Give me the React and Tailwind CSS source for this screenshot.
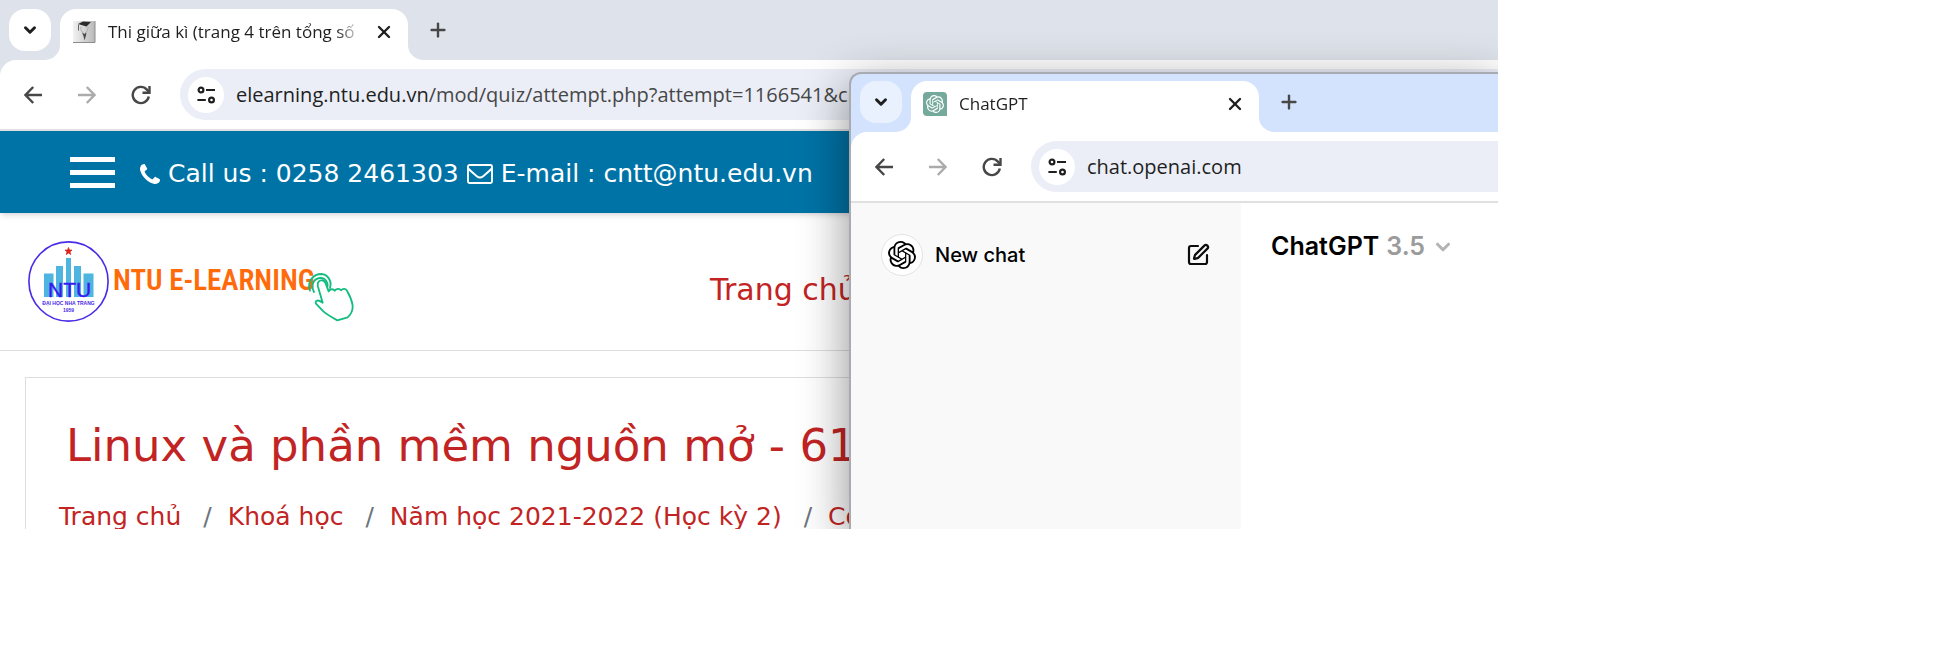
import { Plus, X, ChevronDown, SquarePen } from "lucide-react";
import { SiOpenai } from "react-icons/si";

function TuneIcon() {
  return (
    <svg viewBox="0 0 20 20" className="size-5" fill="none" stroke="#1f1f1f" strokeWidth="2.2" aria-hidden="true">
      <circle cx="5" cy="5" r="2.400" />
      <path d="M10 5h9M1.400 15h8.400" />
      <circle cx="15.500" cy="15" r="2.400" />
    </svg>
  );
}

function ArrowIcon({ forward }) {
  return (
    <svg viewBox="0 0 18 18" className="size-[18px]" fill="none" strokeWidth="2.400" stroke={forward ? "#ababab" : "#474747"} aria-hidden="true">
      {forward ? <path d="M0 9h16M8.800 1l7.700 8-7.700 8" /> : <path d="M18 9H2M9.200 1L1.500 9l7.700 8" />}
    </svg>
  );
}

function ReloadIcon() {
  return (
    <svg viewBox="0 0 20 20" className="size-5" fill="none" stroke="#474747" strokeWidth="2.400" aria-hidden="true">
      <path d="M17.800 11.500A8.100 8.100 0 1 1 15.900 4.600L18 7" />
      <path d="M18.500 1v6.700h-7" />
    </svg>
  );
}

function PhoneIcon() {
  return (
    <svg viewBox="0 128 1408 1408" className="size-5" fill="currentColor" aria-hidden="true">
      <path d="M1408 1240q0 27-10 70.500t-21 68.500q-21 50-122 106-94 51-186 51-27 0-52.500-3.500t-57.500-12.500-47.500-14.500-55.500-20.500-49-18q-98-35-175-83-128-79-264.500-215.500t-215.500-264.500q-48-77-83-175-3-9-18-49t-20.500-55.500-14.500-47.500-12.500-57.500-3.500-52.500q0-92 51-186 56-101 106-122 25-11 68.500-21t70.500-10q14 0 21 3 18 6 53 76 11 19 30 54t35 63.500 31 53.500q3 4 17.500 25t21.500 35.500 7 28.500q0 20-28.500 50t-62 55-62 53-28.500 46q0 9 5 22.500t8.500 20.500 14 24 11.500 19q76 137 174 235t235 174q2 1 19 11.500t24 14 20.500 8.500 22.500 5q18 0 46-28.500t53-62 55-62 50-28.500q14 0 28.500 7t35.500 21.500 25 17.500q25 15 53.500 31t63.500 35 54 30q70 35 76 53 3 7 3 21z" />
    </svg>
  );
}

function EnvelopeIcon() {
  return (
    <svg viewBox="0 0 26 20" className="h-5 w-[26px]" fill="none" stroke="currentColor" strokeWidth="1.900" aria-hidden="true">
      <rect x="1" y="1" width="24" height="18" rx="1.500" />
      <path d="M1.200 4.500c2.800 3 5.800 5.300 8.600 7.700 2.400 2 4 2 6.400 0 2.800-2.400 5.800-4.700 8.600-7.700" />
    </svg>
  );
}

function Curve({ flip, className }) {
  return (
    <svg viewBox="0 0 16 16" className={className} aria-hidden="true">
      {flip ? <path d="M0 0v16h16A16 16 0 0 1 0 0z" /> : <path d="M16 0v16H0A16 16 0 0 0 16 0z" />}
    </svg>
  );
}

function TabStrip({ title, favicon, stripClass, searchClass }) {
  return (
    <div className={`flex items-end ${stripClass}`}>
      <button type="button" aria-label="Search tabs" className={`mb-[9px] ml-[9px] flex size-[42px] shrink-0 items-center justify-center rounded-2xl ${searchClass}`}>
        <ChevronDown className="size-[18px]" strokeWidth={4} color="#1f1f1f" />
      </button>
      <Curve className="-ml-[6px] size-[15px] shrink-0 fill-white" />
      <div className="flex h-[51px] w-[348px] shrink-0 items-center rounded-t-2xl bg-white pb-[6px] pl-3">
        {favicon}
        <span className="ml-3 flex-1 overflow-hidden text-[17px] whitespace-nowrap text-[#1f1f1f] [mask-image:linear-gradient(to_right,black_90%,transparent)]">{title}</span>
        <button type="button" aria-label="Close tab" className="mr-[14px] ml-3 shrink-0">
          <X className="size-5" strokeWidth={2.8} color="#1f1f1f" />
        </button>
      </div>
      <Curve flip className="size-[15px] shrink-0 fill-white" />
      <button type="button" aria-label="New tab" className="mb-[19px] ml-1 shrink-0">
        <Plus className="size-[22px]" strokeWidth={2.6} color="#474747" />
      </button>
    </div>
  );
}

function Toolbar({ children }) {
  return (
    <div className="flex h-[69px] items-center rounded-tl-2xl bg-white pl-6">
      <button type="button" aria-label="Back"><ArrowIcon /></button>
      <button type="button" aria-label="Forward" className="ml-9"><ArrowIcon forward /></button>
      <button type="button" aria-label="Reload" className="ml-[35px]"><ReloadIcon /></button>
      <div className="ml-[29px] flex h-[51px] flex-1 items-center overflow-hidden rounded-l-full bg-[#ebeef7] pl-2">
        <button type="button" aria-label="Site information" className="flex size-9 shrink-0 items-center justify-center rounded-full bg-white"><TuneIcon /></button>
        <span className="ml-3 text-xl whitespace-nowrap text-[#1f1f1f]">{children}</span>
      </div>
    </div>
  );
}

function StudentFavicon() {
  return (
    <svg viewBox="0 0 24 24" className="size-6 shrink-0" aria-hidden="true">
      <defs>
        <linearGradient id="fav" x1="0" y1="0" x2="1" y2="0"><stop offset="0" stopColor="#f2f2f2" /><stop offset="1" stopColor="#b8b8b8" /></linearGradient>
      </defs>
      <rect x="1" y="1" width="22" height="22" rx="1" fill="url(#fav)" />
      <path d="M1 22.500h22V1" fill="none" stroke="#8c8c8c" />
      <path d="M6 4l5-2.500 8 .500-4.500 4.500z" fill="#2b2b2b" />
      <path d="M6.500 4.500v6" stroke="#555" fill="none" strokeWidth=".9" />
      <path d="M9 6.500c-.8 3.500.8 5.500 2.500 6.500M16 6.500c0 3-.8 5.500-3 6.500" stroke="#b0b0b0" fill="none" />
      <path d="M10 12.500l2.500 1.500 2-1.500-.5 3-1.500 5-1-4.500z" fill="#4a4a4a" />
    </svg>
  );
}

function NtuLogo() {
  return (
    <svg viewBox="0 0 330 84" className="h-[84px] w-[330px] shrink-0" role="img" aria-label="NTU E-Learning" fontFamily="'Liberation Sans', sans-serif">
      <circle cx="40.500" cy="41.500" r="39.600" fill="#fff" stroke="#4a2be8" strokeWidth="1.600" />
      <path d="M40.500 7.500l.9 2.600h2.600l-2.100 1.700.8 2.700-2.200-1.600-2.200 1.600.8-2.700-2.100-1.700h2.600z" fill="#dc2318" stroke="#dc2318" strokeWidth=".8" />
      <path d="M16 33.500h9.500V57H16zM28 26h7v31h-7zM38 18h5v39h-5zM46 26h7v31h-7zM55.500 33.500h10V57h-10z" fill="#4db5e0" />
      <text x="20" y="57" fontSize="21" fill="#3a18f0" stroke="#3a18f0" strokeWidth=".4">NTU</text>
      <text x="40.500" y="65" fontSize="5" fontWeight="bold" textAnchor="middle" fill="#4a2be8">ĐẠI HỌC NHA TRANG</text>
      <text x="40.500" y="71.500" fontSize="5" fontWeight="bold" textAnchor="middle" fill="#4a2be8">1959</text>
      <text x="85" y="50" fontSize="29" fontWeight="600" fontFamily="'Roboto Condensed', 'Liberation Sans', sans-serif" fill="#ff6a0a">NTU E-LEARNING</text>
      <g transform="translate(262 20) scale(.3333)" fill="none" stroke="#12bd7f" strokeWidth="5.500" strokeLinecap="round" strokeLinejoin="round">
        <path d="M98 128L84 80C79 60 101 54 107 70L116 94C120 86 130 86 134 92C138 86 148 84 153 91C159 84 168 86 171 92C178 104 186 124 188 136C189 152 182 164 173 172L142 181C126 172 108 161 100 154L78 131C74 120 84 118 98 128Z" fill="#fff" />
        <path d="M72 96C58 68 78 53 94 54C106 55 113 65 113 78M60 92C50 62 72 42 94 42C112 43 127 62 120 84" />
      </g>
    </svg>
  );
}

function Separator() {
  return <span className="mr-4 ml-[22px] text-[#6c757d]">/</span>;
}

export default function App() {
  return (
    <main className="relative max-h-[529px] w-full max-w-[1498px] overflow-hidden bg-white font-['Open_Sans',sans-serif]">
      <section className="bg-[#dee2ea]">
        <TabStrip title="Thi giữa kì (trang 4 trên tổng số" favicon={<StudentFavicon />} stripClass="h-[60px]" searchClass="bg-white" />
        <Toolbar>elearning.ntu.edu.vn<span className="text-[#474747]">/mod/quiz/attempt.php?attempt=1166541&amp;cr</span></Toolbar>
        <div className="border-t-2 border-[#dfe0df] bg-white pb-10 font-['DejaVu_Sans',sans-serif]">
          <header className="flex h-[82px] items-center bg-[#0073a6] pl-[70px] text-[25px] whitespace-nowrap text-white shadow-md">
            <button type="button" aria-label="Menu" className="flex flex-col gap-2">
              <span className="h-[5px] w-[45px] bg-white" />
              <span className="h-[5px] w-[45px] bg-white" />
              <span className="h-[5px] w-[45px] bg-white" />
            </button>
            <div className="flex items-center gap-2 pt-1 pl-[25px]">
              <PhoneIcon />
              <span>Call us : 0258 2461303</span>
              <EnvelopeIcon />
              <span>E-mail : cntt@ntu.edu.vn</span>
            </div>
          </header>
          <div className="flex h-[138px] items-center border-b border-[#dedede] pl-7">
            <NtuLogo />
            <a href="#home" className="ml-[352px] pt-4 text-3xl whitespace-nowrap text-[#c22424]">Trang chủ</a>
          </div>
          <div className="mt-[26px] ml-[25px] border border-[#dedede] pt-[41px] pb-10 pl-[33px] whitespace-nowrap text-[#c22424]">
            <h1 className="ml-[7px] text-[45px] leading-[54px]">Linux và phần mềm nguồn mở - 61</h1>
            <nav className="mt-[26px] flex text-[25px] leading-9">
              <a href="#home">Trang chủ</a>
              <Separator />
              <a href="#courses">Khoá học</a>
              <Separator />
              <a href="#year">Năm học 2021-2022 (Học kỳ 2)</a>
              <Separator />
              <a href="#faculty">Cô</a>
            </nav>
          </div>
        </div>
      </section>
      <section className="absolute top-[72px] right-0 bottom-0 left-[849px] flex flex-col overflow-hidden rounded-tl-xl border-t-2 border-l-2 border-[#a9abb3] bg-[#d3e2fd] shadow-[0_14px_48px_2px_rgba(0,0,0,0.42)]">
        <TabStrip
          title="ChatGPT"
          favicon={<span className="flex size-6 items-center justify-center rounded rounded-br-none bg-[#75a99b] text-white"><SiOpenai className="size-[18px]" /></span>}
          stripClass="h-[58px]"
          searchClass="bg-[#eaf1fe]"
        />
        <Toolbar>chat.openai.com</Toolbar>
        <div className="flex flex-1 border-t-2 border-[#e0e0e0] bg-white font-[Inter,sans-serif]">
          <aside className="w-[390px] bg-[#f9f9f9] px-[30px] pt-[31px]">
            <button type="button" className="flex w-full items-center text-xl font-medium text-black">
              <span className="mr-3 flex size-[42px] items-center justify-center rounded-full border border-[#e3e3e3] bg-white"><SiOpenai className="size-7" /></span>
              New chat
              <SquarePen className="mr-px ml-auto size-6" strokeWidth={2.2} color="#0d0d0d" />
            </button>
          </aside>
          <div className="px-[30px] pt-[25px]">
            <button type="button" className="flex items-center text-[25px] font-semibold text-black">
              ChatGPT
              <span className="ml-[7px] text-[#9b9b9b]">3.5</span>
              <ChevronDown className="ml-[7px] size-[22px]" strokeWidth={3.4} color="#b4b4b4" />
            </button>
          </div>
        </div>
      </section>
    </main>
  );
}
